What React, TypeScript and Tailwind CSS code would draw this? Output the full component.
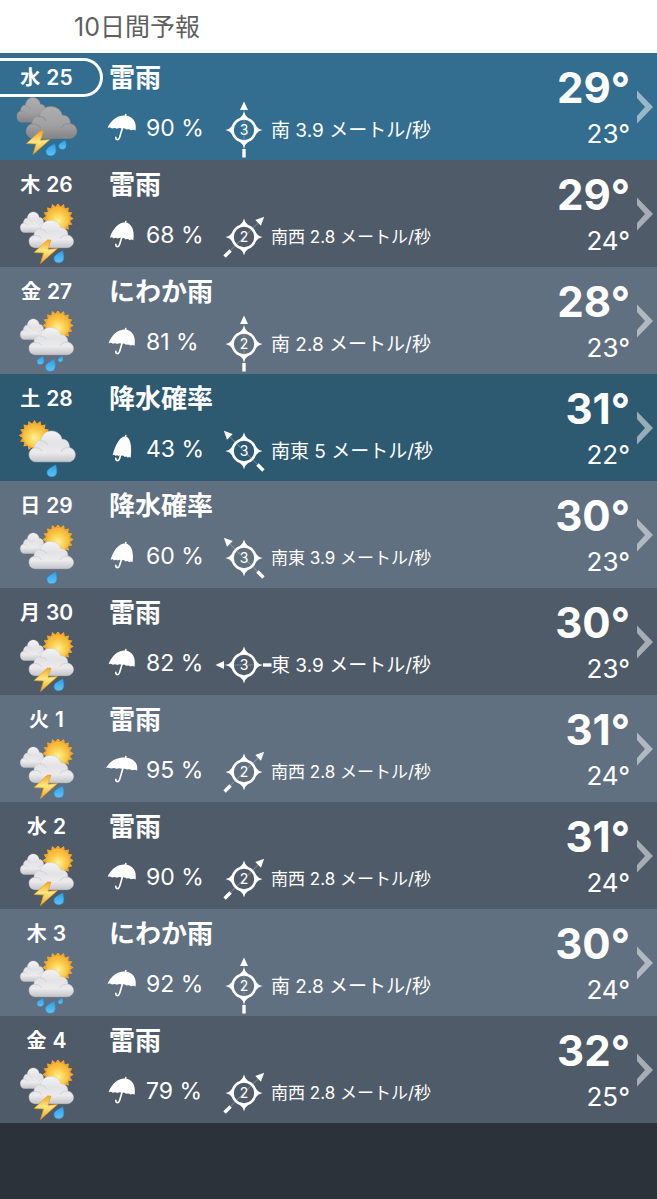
import clsx from 'clsx';

type Sky = 'storm' | 'sunStorm' | 'sunShowers' | 'sunDrop' | 'sunCloudsDrop';
type Wind = 'south' | 'southwest' | 'southeast' | 'east';

interface Day {
  weekday: string;
  date: number;
  title: string;
  sky: Sky;
  rain: number;
  wind: Wind;
  force: number;
  speed: string;
  high: number;
  low: number;
  tone: string;
  today?: boolean;
}

const LIGHT = 'bg-[#617080]';
const DARK = 'bg-[#4f5b69]';
const TODAY = 'bg-[#336e90]';
const SATURDAY = 'bg-[#2e5a71]';

const WIND_LABEL: Record<Wind, string> = {
  south: '南',
  southwest: '南西',
  southeast: '南東',
  east: '東',
};

// the arrow points where the wind blows to
const WIND_ANGLE: Record<Wind, number> = {
  south: 0,
  southwest: 45,
  southeast: -45,
  east: -90,
};

const days: Day[] = [
  { weekday: '水', date: 25, title: '雷雨', sky: 'storm', rain: 90, wind: 'south', force: 3, speed: '3.9', high: 29, low: 23, tone: TODAY, today: true },
  { weekday: '木', date: 26, title: '雷雨', sky: 'sunStorm', rain: 68, wind: 'southwest', force: 2, speed: '2.8', high: 29, low: 24, tone: DARK },
  { weekday: '金', date: 27, title: 'にわか雨', sky: 'sunShowers', rain: 81, wind: 'south', force: 2, speed: '2.8', high: 28, low: 23, tone: LIGHT },
  { weekday: '土', date: 28, title: '降水確率', sky: 'sunDrop', rain: 43, wind: 'southeast', force: 3, speed: '5', high: 31, low: 22, tone: SATURDAY },
  { weekday: '日', date: 29, title: '降水確率', sky: 'sunCloudsDrop', rain: 60, wind: 'southeast', force: 3, speed: '3.9', high: 30, low: 23, tone: LIGHT },
  { weekday: '月', date: 30, title: '雷雨', sky: 'sunStorm', rain: 82, wind: 'east', force: 3, speed: '3.9', high: 30, low: 23, tone: DARK },
  { weekday: '火', date: 1, title: '雷雨', sky: 'sunStorm', rain: 95, wind: 'southwest', force: 2, speed: '2.8', high: 31, low: 24, tone: LIGHT },
  { weekday: '水', date: 2, title: '雷雨', sky: 'sunStorm', rain: 90, wind: 'southwest', force: 2, speed: '2.8', high: 31, low: 24, tone: DARK },
  { weekday: '木', date: 3, title: 'にわか雨', sky: 'sunShowers', rain: 92, wind: 'south', force: 2, speed: '2.8', high: 30, low: 24, tone: LIGHT },
  { weekday: '金', date: 4, title: '雷雨', sky: 'sunStorm', rain: 79, wind: 'southwest', force: 2, speed: '2.8', high: 32, low: 25, tone: DARK },
];

// Gradients shared by all weather icons
function IconDefs() {
  return (
    <svg className="absolute size-0" aria-hidden="true">
      <defs>
        <linearGradient id="cloud" x1="0" y1="0" x2="0" y2="1">
          <stop offset="0" stopColor="#f3f3f5" />
          <stop offset="0.4" stopColor="#e3e3e5" />
          <stop offset="0.7" stopColor="#ebebed" />
          <stop offset="1" stopColor="#c6c6ca" />
        </linearGradient>
        <linearGradient id="cloudDark" x1="0" y1="0" x2="0" y2="1">
          <stop offset="0" stopColor="#aeaeb0" />
          <stop offset="0.6" stopColor="#a0a0a2" />
          <stop offset="1" stopColor="#858587" />
        </linearGradient>
        <radialGradient id="sun" cx="0.5" cy="0.6">
          <stop offset="0" stopColor="#fff0a0" />
          <stop offset="0.55" stopColor="#fcd455" />
          <stop offset="1" stopColor="#f8b93a" />
        </radialGradient>
        <linearGradient id="bolt" x1="0" y1="0" x2="0" y2="1">
          <stop offset="0" stopColor="#f5a623" />
          <stop offset="0.45" stopColor="#ffe680" />
          <stop offset="1" stopColor="#f3a51f" />
        </linearGradient>
        <linearGradient id="drop" x1="0" y1="0" x2="0" y2="1">
          <stop offset="0" stopColor="#2f9fe4" />
          <stop offset="1" stopColor="#5cc3f7" />
        </linearGradient>
      </defs>
    </svg>
  );
}

function Cloud({ x, y, sx, sy, dark = false }: { x: number; y: number; sx: number; sy: number; dark?: boolean }) {
  return (
    <g transform={`translate(${x} ${y}) scale(${sx} ${sy})`}>
      <path
        d="M6.5 28A6.5 6.5 0 0 1 5.5 15.2C5.5 11 9 8 12 8.6C13 3 17 0 22 0C27.5 0 31.5 3.4 32.2 7.6C36.5 7.4 39.6 10.5 39.3 15C42.8 15.8 45 18.4 45 21.6C45 25 42.3 28 38.5 28Z"
        fill={dark ? 'url(#cloudDark)' : 'url(#cloud)'}
        stroke={dark ? '#8a8a8c' : '#cdcdd1'}
        strokeWidth="0.5"
      />
      <path
        d="M5.5 15.5C9 14.8 12 16.5 13 18.6M12 8.9C15 8.9 17 10.4 18 12.4M39 15.2C36 14.6 32.5 16.2 31.5 18.6"
        fill="none"
        stroke={dark ? '#8c8c8e' : '#c9c9cd'}
        strokeOpacity="0.7"
        strokeWidth="1"
        strokeLinecap="round"
      />
    </g>
  );
}

const sunPoints = Array.from({ length: 32 }, (_, i) => {
  const r = i % 2 ? 12.3 : 15.6;
  const a = (i * Math.PI) / 16;
  return `${(r * Math.sin(a)).toFixed(2)},${(-r * Math.cos(a)).toFixed(2)}`;
}).join(' ');

function Sun({ x, y }: { x: number; y: number }) {
  return (
    <g transform={`translate(${x} ${y})`}>
      <polygon points={sunPoints} fill="#f3a62b" />
      <circle r="11.6" fill="url(#sun)" />
    </g>
  );
}

function Bolt({ x, y }: { x: number; y: number }) {
  return (
    <path
      transform={`translate(${x} ${y})`}
      d="M13.5 0L0 12.5L9.5 13L6.5 23.5L23.5 8.5L14 9.2L17 0Z"
      fill="url(#bolt)"
      stroke="#e79a1c"
      strokeWidth="0.6"
      strokeLinejoin="round"
    />
  );
}

function Drop({ x, y, size = 1 }: { x: number; y: number; size?: number }) {
  return (
    <path
      transform={`translate(${x} ${y}) scale(${size})`}
      d="M3.6 -6.2C4.6 -3 5.2 0 4.6 2.2C4 4.6 2 5.8 -0.4 5.8C-3 5.8 -5 4 -5 1.4C-5 -2 -0.5 -3.6 3.6 -6.2Z"
      fill="url(#drop)"
      stroke="#2b8fd2"
      strokeWidth="0.5"
    />
  );
}

function SkyIcon({ sky }: { sky: Sky }) {
  if (sky === 'storm') {
    return (
      <svg className="h-[63px] w-[93px]" viewBox="0 0 93 63" aria-hidden="true">
        <Cloud x={16.5} y={0.5} sx={0.74} sy={0.88} dark />
        <Cloud x={25.5} y={9.5} sx={1.14} sy={1.14} dark />
        <Bolt x={26.5} y={34} />
        <Drop x={51} y={53} />
        <Drop x={62.5} y={48} size={0.75} />
      </svg>
    );
  }
  return (
    <svg className="h-[63px] w-[93px]" viewBox="0 0 93 63" aria-hidden="true">
      {sky === 'sunDrop' ? (
        <>
          <Sun x={34.5} y={17.5} />
          <Cloud x={28.5} y={13} sx={1.04} sy={1.1} />
        </>
      ) : (
        <>
          <Sun x={58} y={14.5} />
          <Cloud x={20} y={8} sx={0.6} sy={0.73} />
          <Cloud x={28.5} y={16.5} sx={1} sy={0.97} />
        </>
      )}
      {sky === 'sunStorm' && (
        <>
          <Bolt x={34} y={36} />
          <Drop x={59} y={53} />
        </>
      )}
      {sky === 'sunShowers' && (
        <>
          <Drop x={40.5} y={49.5} size={0.7} />
          <Drop x={50.5} y={54.5} />
          <Drop x={60.5} y={48} size={0.5} />
        </>
      )}
      {(sky === 'sunDrop' || sky === 'sunCloudsDrop') && <Drop x={52} y={53} />}
    </svg>
  );
}

// The umbrella opens wider and flatter as the chance of rain goes up
function Umbrella({ rain }: { rain: number }) {
  const width = rain >= 95 ? 31 : rain >= 90 ? 28 : rain >= 75 ? 26 : rain >= 65 ? 23.5 : rain >= 60 ? 22 : 18;
  const tall = 1.04 + (28 - width) * 0.05;
  return (
    <svg className="h-[28px] w-[32px] shrink-0 overflow-visible" viewBox="0 0 32 28" aria-hidden="true">
      <g transform={`matrix(${width / 28} 0.09 -0.3 ${tall} 19.5 1.6)`}>
        <path
          d="M-14 13C-13 5 -7 0 0 0S13 5 14 13Q11.5 11.9 9.6 13.2Q7 11.8 4.8 13Q2.4 11.6 0 12.4Q-2.4 11.6 -4.8 13Q-7 11.8 -9.6 13.2Q-11.5 11.9 -14 13Z"
          fill="#fff"
        />
      </g>
      <path
        d="M19.8 0.6L19.3 3M17 12L13.6 23.4C12.8 26.4 9.6 26.2 9.8 23.4"
        fill="none"
        stroke="#fff"
        strokeWidth="1.6"
        strokeLinecap="round"
      />
    </svg>
  );
}

function Compass({ wind, force }: { wind: Wind; force: number }) {
  return (
    <svg className="h-[60px] w-[54px] shrink-0 overflow-visible" viewBox="-27 -30 54 60" aria-hidden="true">
      <g fill="#fff">
        <g transform={`rotate(${WIND_ANGLE[wind]})`}>
          <path d="M0 -20V19" stroke="#fff" strokeOpacity="0.25" strokeWidth="1" />
          <path d="M0 -28.5L4 -20H-4Z" />
          <path d="M-1.7 19H1.7V27.5H-1.7Z" />
        </g>
        <circle r="11.5" fill="none" stroke="#fff" strokeWidth="2.6" />
        <path d="M0 -18.5Q1 -14 4 -12H-4Q-1 -14 0 -18.5ZM0 18.5Q1 14 4 12H-4Q-1 14 0 18.5ZM-18.5 0Q-14 1 -12 4V-4Q-14 -1 -18.5 0ZM18.5 0Q14 1 12 4V-4Q14 -1 18.5 0Z" />
        <text y="5" textAnchor="middle" className="text-[14px] font-normal">
          {force}
        </text>
      </g>
    </svg>
  );
}

function DayRow({ day }: { day: Day }) {
  const label = WIND_LABEL[day.wind];
  // long labels get the smaller size so the line keeps its width
  const small = label.length + day.speed.length > 4;

  return (
    <li>
      <a href="#" className={clsx('flex h-[107px] text-white', day.tone)}>
        <div className="w-[106px] shrink-0 pt-[5px]">
          <div
            className={clsx(
              'flex h-[39px] w-[103px] items-center justify-center gap-[6px] rounded-r-full border-y-3 border-r-3 pt-px pr-[7px] text-[21px] font-semibold',
              day.today ? 'border-white' : 'border-transparent'
            )}
          >
            <span className="text-[20px]">{day.weekday}</span>
            <span>{day.date}</span>
          </div>
          <SkyIcon sky={day.sky} />
        </div>

        <div className="min-w-0 flex-1">
          <h2 className="h-[47px] pt-[3px] pl-[3px] text-[26px] leading-[44px] font-semibold">{day.title}</h2>
          <div className="flex h-[60px] items-center whitespace-nowrap">
            <div className="flex w-[111px] shrink-0 items-center gap-2 pb-1">
              <Umbrella rain={day.rain} />
              <span className="text-[23px] leading-7">{day.rain} %</span>
            </div>
            <Compass wind={day.wind} force={day.force} />
            <span className={clsx('pt-[2px]', small ? 'text-[17px]' : 'text-[19px]')}>
              {label} {day.speed} メートル/秒
            </span>
          </div>
        </div>

        <div className="shrink-0 pt-3 text-right">
          <div className="text-[42px] leading-[46px] font-bold">{day.high}°</div>
          <div className="text-[26px] leading-[46px]">{day.low}°</div>
        </div>
        <svg className="mr-1 ml-[6px] h-[107px] w-[17px] shrink-0" viewBox="0 0 17 107" aria-hidden="true">
          <path d="M1 37.5L17 54L1 70.5V63L9 54L1 45Z" fill="#fff" fillOpacity="0.5" />
        </svg>
      </a>
    </li>
  );
}

export default function App() {
  return (
    <main className="min-h-screen bg-[#2b323a] font-['Inter','Noto_Sans_CJK_JP',sans-serif]">
      <IconDefs />
      <header className="flex h-[53px] items-center bg-white pt-[3px] pl-[74px]">
        <h1 className="text-[25px] text-[#5f5f5f]">10日間予報</h1>
      </header>
      <ul>
        {days.map((day) => (
          <DayRow key={`${day.weekday}-${day.date}`} day={day} />
        ))}
      </ul>
    </main>
  );
}
